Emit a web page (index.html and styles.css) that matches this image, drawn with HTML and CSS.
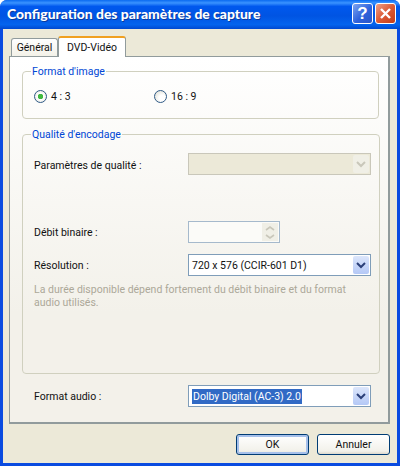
FILE: index.html
```html
<!DOCTYPE html>
<html lang="fr">
  <head>
    <meta charset="UTF-8" />
    <meta name="viewport" content="width=device-width, initial-scale=1.0" />
    <title>Configuration des paramètres de capture</title>
    <link rel="stylesheet" href="styles.css">
  </head>
  <body>
    <div class="window">
      <!-- barre de titre -->
      <div class="titlebar">
        <span class="title">Configuration des paramètres de capture</span>
        <span class="capbtn help">?</span>
        <span class="capbtn close">
          <svg width="13" height="13" viewBox="0 0 13 13"><path d="M2 2l9 9M11 2l-9 9" stroke="#fff" stroke-width="2.4" fill="none"/></svg>
        </span>
      </div>

      <div class="client">
        <div class="tabs">
          <span class="tab">Général</span>
          <span class="tab active">DVD-Vidéo</span>
        </div>

        <div class="panel">
          <fieldset class="group format">
            <legend>Format d'image</legend>
            <div class="radios">
              <span class="radio-item"><span class="radio checked"></span>4 : 3</span>
              <span class="radio-item"><span class="radio"></span>16 : 9</span>
            </div>
          </fieldset>

          <fieldset class="group quality">
            <legend>Qualité d'encodage</legend>
            <div class="row row-quality">
              <span class="label">Paramètres de qualité :</span>
              <div class="combo disabled">
                <span class="value"></span>
                <span class="arrow">
                  <svg width="10" height="8" viewBox="0 0 10 8"><path d="M1 2l4 4 4-4" stroke="#c9c7ba" stroke-width="2" fill="none"/></svg>
                </span>
              </div>
            </div>
            <div class="row row-rate">
              <span class="label">Débit binaire :</span>
              <div class="spin">
                <span class="spin-btns">
                  <svg width="10" height="6" viewBox="0 0 10 6"><path d="M1 5l4-3 4 3" stroke="#c9c7ba" stroke-width="1.6" fill="none"/></svg>
                  <svg width="10" height="6" viewBox="0 0 10 6"><path d="M1 1l4 3 4-3" stroke="#c9c7ba" stroke-width="1.6" fill="none"/></svg>
                </span>
              </div>
            </div>
            <div class="row row-res">
              <span class="label">Résolution :</span>
              <div class="combo">
                <span class="value">720 x 576 (CCIR-601 D1)</span>
                <span class="arrow">
                  <svg width="10" height="8" viewBox="0 0 10 8"><path d="M1 2l4 4 4-4" stroke="#2b3f78" stroke-width="2" fill="none"/></svg>
                </span>
              </div>
            </div>
            <p class="hint">La durée disponible dépend fortement du débit binaire et du format audio utilisés.</p>
          </fieldset>

          <div class="row row-audio">
            <span class="label">Format audio :</span>
            <div class="combo">
              <span class="value"><span class="selected">Dolby Digital (AC-3) 2.0</span></span>
              <span class="arrow">
                <svg width="10" height="8" viewBox="0 0 10 8"><path d="M1 2l4 4 4-4" stroke="#2b3f78" stroke-width="2" fill="none"/></svg>
              </span>
            </div>
          </div>
        </div>

        <div class="buttons">
          <button class="default">OK</button>
          <button>Annuler</button>
        </div>
      </div>
    </div>
  </body>
</html>
```

FILE: styles.css
```css
html, body {
  margin: 0;
  padding: 0;
  background-color: #fff;
}

body {
  font-family: Roboto, "Liberation Sans", sans-serif;
  font-size: 10.5px;
  color: #111;
}

.window {
  width: 400px;
  height: 466px;
  display: flex;
  flex-direction: column;
  box-sizing: border-box;
  border-radius: 7px 7px 0 0;
  overflow: hidden;
  background-color: #0a4be0;
}

.titlebar {
  height: 29px;
  flex: none;
  display: flex;
  align-items: center;
  box-sizing: border-box;
  padding: 0 4px 2px 7px;
  gap: 2px;
  background: linear-gradient(180deg, #0a6af0 0%, #3a93ff 10%, #0058ee 22%, #0054e3 55%, #0464ee 85%, #0048d0 100%);
}

.title {
  flex: 1;
  color: #fff;
  font-family: "Lato", sans-serif;
  font-weight: 900;
  font-size: 13.9px;
  text-shadow: 1px 1px 0 #0b3a9c;
  white-space: nowrap;
}

.capbtn {
  width: 21px;
  height: 21px;
  box-sizing: border-box;
  border: 1px solid #fff;
  border-radius: 3px;
  display: flex;
  align-items: center;
  justify-content: center;
  color: #fff;
}

.help {
  font-family: "Liberation Sans", sans-serif;
  font-weight: 700;
  font-size: 17px;
  background: linear-gradient(135deg, #7ea5f0, #2f62dc 55%, #2a55c8);
}

.close {
  background: linear-gradient(135deg, #eda08a, #dc5a35 50%, #c43c18);
}

.client {
  flex: 1;
  margin: 0 3px 3px;
  box-sizing: border-box;
  padding: 7px 7px 0 6px;
  background-color: #ece9d8;
  display: flex;
  flex-direction: column;
}

.tabs {
  display: flex;
  align-items: flex-end;
  height: 21px;
  padding-left: 2px;
  position: relative;
  z-index: 1;
  margin-bottom: -1px;
}

.tab {
  width: 47px;
  height: 18px;
  box-sizing: border-box;
  border: 1px solid #919b9c;
  border-bottom: none;
  border-radius: 3px 3px 0 0;
  background: linear-gradient(180deg, #fff, #f3f1e8);
  padding-top: 1px;
  margin-bottom: 1px;
  line-height: 15px;
  text-align: center;
}

.tab.active {
  width: 68px;
  height: 21px;
  margin-bottom: 0;
  padding-top: 2px;
  background: #fff;
  border-top: 2px solid #f0a020;
}

.panel {
  height: 368px;
  flex: none;
  box-sizing: border-box;
  border: 1px solid #919b9c;
  border-right-width: 2px;
  border-bottom-width: 2px;
  background: linear-gradient(180deg, #fff 0%, #f3f1ea 70%);
  padding: 7px 9px 0 12px;
}

.group {
  margin: 0;
  padding: 0 8px;
  border: 1px solid #d0d0bf;
  border-radius: 4px;
}

.group legend {
  color: #0046d5;
  padding: 0 1px;
  line-height: 15px;
}

.format {
  height: 55px;
  box-sizing: border-box;
}

.radios {
  display: flex;
  padding: 11px 0 0 3px;
}

.radio-item {
  display: flex;
  align-items: center;
  gap: 4px;
  width: 120px;
}

.radio {
  width: 13px;
  height: 13px;
  box-sizing: border-box;
  border: 1px solid #2f5a86;
  border-radius: 50%;
  background: radial-gradient(circle at 65% 65%, #fff 30%, #d8d8cc);
  display: block;
}

.radio.checked {
  background: radial-gradient(circle, #3fb83f 0, #3fb83f 2.5px, #fff 3px, #e4e4da);
}

.quality {
  height: 247px;
  box-sizing: border-box;
  margin-top: 8px;
}

.row {
  display: flex;
  align-items: center;
  margin-left: 3px;
}

.label {
  width: 154px;
  flex: none;
}

.row-quality {
  margin-top: 11px;
}

.row-quality .label {
  padding-top: 3px;
}

.row-rate {
  margin-top: 46px;
}

.row-res {
  margin-top: 11px;
}

.row-audio {
  margin: 11px 0 0 12px;
}

.combo {
  width: 183px;
  height: 22px;
  box-sizing: border-box;
  border: 1px solid #7f9db9;
  background-color: #fff;
  display: flex;
  padding: 1px;
}

.combo .value {
  flex: 1;
  padding: 2px 0 0 2px;
  line-height: 15px;
  white-space: nowrap;
}

.selected {
  background-color: #316ac5;
  color: #fff;
  display: inline-block;
  padding: 0 1px;
}

.arrow {
  width: 16px;
  flex: none;
  border-radius: 2px;
  display: flex;
  align-items: center;
  justify-content: center;
  background: linear-gradient(180deg, #dce6fb, #b4c8f6);
}

.combo.disabled {
  border-color: #c9c7ba;
  background-color: #ece9d8;
}

.combo.disabled .arrow {
  background: #f0efe6;
}

.spin {
  width: 92px;
  height: 22px;
  box-sizing: border-box;
  border: 1px solid #a5b9cc;
  background-color: #fbfbf8;
  display: flex;
  justify-content: flex-end;
  padding: 1px;
}

.spin-btns {
  width: 16px;
  background-color: #f0efe6;
  display: flex;
  flex-direction: column;
  align-items: center;
  justify-content: space-around;
}

.hint {
  max-width: 320px;
  margin: 7px 0 0 3px;
  color: #aca899;
  line-height: 13px;
}

.buttons {
  display: flex;
  justify-content: flex-end;
  gap: 8px;
  margin-top: 10px;
}

button {
  width: 73px;
  height: 21px;
  box-sizing: border-box;
  border: 1px solid #003c74;
  border-radius: 3px;
  background: linear-gradient(180deg, #fff, #f2f1ea 85%, #dcd8cc);
  font: inherit;
  color: #111;
  padding: 0;
}

button.default {
  box-shadow: inset 0 0 0 2px #a6c0ea;
}
```
